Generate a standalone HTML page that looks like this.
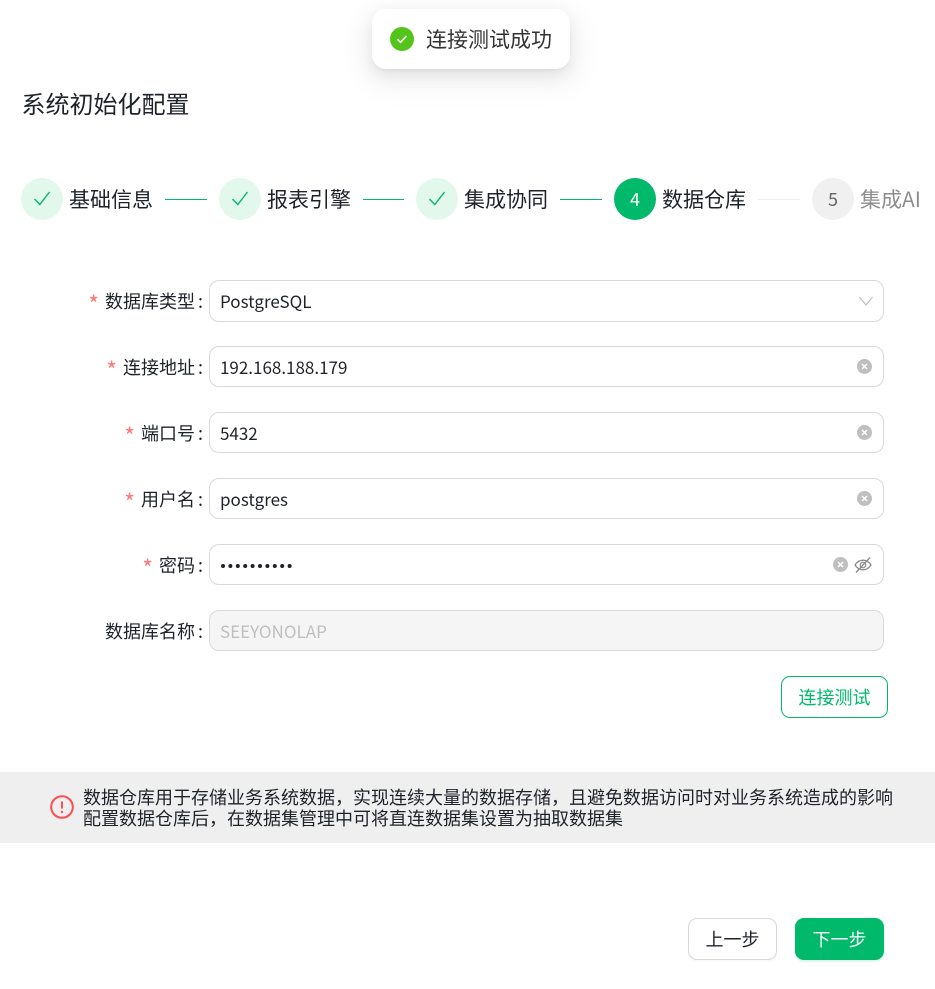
<!DOCTYPE html>
<html lang="zh"><head><meta charset="utf-8"><title>系统初始化配置</title>
<style>
*{box-sizing:border-box}
html,body{margin:0;padding:0;background:#fff}
body{position:relative;width:935px;height:989px;overflow:hidden;font-family:"Noto Sans CJK SC","Liberation Sans",sans-serif;color:#1f2329}
.a{position:absolute;white-space:nowrap}
.title{left:21.500px;top:85px;font-size:24px;line-height:36px}
.c{position:absolute;top:178px;width:42px;height:42px;border-radius:50%;text-align:center;line-height:42px;font-size:18px}
.done{background:#e2f8ec}
.c svg{position:absolute;left:11px;top:11px}
.sl{position:absolute;top:184px;font-size:21px;line-height:30px;white-space:nowrap}
.ln{position:absolute;top:199px;height:1px;background:#00b96b}
.lb{position:absolute;right:732px;font-size:18px;line-height:26px;white-space:nowrap}
.lb i{font-style:normal;color:#ff7875;margin-right:6px;font-size:23px;line-height:0;position:relative;top:5px}
.lb b{font-weight:400;margin-left:3px}
.ip{position:absolute;left:209px;width:675px;height:41px;border:1px solid #d9d9d9;border-radius:10px;font-size:17px;line-height:39px;padding-left:10px}
.clr{position:absolute;width:15px;height:15px}
.btn{position:absolute;border-radius:9px;text-align:center;font-size:18px}
</style></head>
<body>
<div class="a" style="left:372px;top:9px;width:198px;height:60px;background:#fff;border-radius:14px;box-shadow:0 6px 16px rgba(0,0,0,.08),0 3px 6px -4px rgba(0,0,0,.12),0 9px 28px 8px rgba(0,0,0,.05)"></div>
<svg class="a" style="left:390px;top:27px" width="24" height="24" viewBox="0 0 24 24"><circle cx="12" cy="12" r="12" fill="#52c41a"/><path d="M7.5 12.3l3 3 6-6.3" fill="none" stroke="#fff" stroke-width="1.6"/></svg>
<div class="a" style="left:426px;top:24px;font-size:21px;line-height:30px;color:#333">连接测试成功</div>

<div class="a title">系统初始化配置</div>

<div class="c done" style="left:21px"><svg width="20" height="20" viewBox="0 0 20 20"><path d="M2.5 10l5.300 5.500L17.500 3" fill="none" stroke="#00b96b" stroke-width="1.400"/></svg></div>
<div class="sl" style="left:69px">基础信息</div>
<div class="ln" style="left:165px;width:42px"></div>
<div class="c done" style="left:219px"><svg width="20" height="20" viewBox="0 0 20 20"><path d="M2.5 10l5.300 5.500L17.500 3" fill="none" stroke="#00b96b" stroke-width="1.400"/></svg></div>
<div class="sl" style="left:267px">报表引擎</div>
<div class="ln" style="left:363px;width:41px"></div>
<div class="c done" style="left:416px"><svg width="20" height="20" viewBox="0 0 20 20"><path d="M2.5 10l5.300 5.500L17.500 3" fill="none" stroke="#00b96b" stroke-width="1.400"/></svg></div>
<div class="sl" style="left:464px">集成协同</div>
<div class="ln" style="left:560px;width:42px"></div>
<div class="c" style="left:614px;background:#00b96b;color:#fff">4</div>
<div class="sl" style="left:662px">数据仓库</div>
<div class="ln" style="left:758px;width:42px;background:#f0f0f0"></div>
<div class="c" style="left:812px;background:#f0f0f0;color:#666">5</div>
<div class="sl" style="left:860px;color:#8c8c8c">集成AI</div>

<div class="lb" style="top:288px"><i>*</i>数据库类型<b>:</b></div>
<div class="ip" style="top:280px;height:42px;line-height:40px">PostgreSQL</div>
<svg class="a" style="left:859px;top:295px" width="14" height="12" viewBox="0 0 14 12"><path d="M.5 2l6.5 8L13.500 2" fill="none" stroke="#bfbfbf" stroke-width="1.200"/></svg>

<div class="lb" style="top:354px"><i>*</i>连接地址<b>:</b></div>
<div class="ip" style="top:346px">192.168.188.179</div>
<svg class="clr" style="left:857px;top:359px" viewBox="0 0 15 15"><circle cx="7.5" cy="7.5" r="7.500" fill="#bfbfbf"/><path d="M5 5l5 5M10 5l-5 5" stroke="#fff" stroke-width="1.500"/></svg>

<div class="lb" style="top:420px"><i>*</i>端口号<b>:</b></div>
<div class="ip" style="top:412px">5432</div>
<svg class="clr" style="left:857px;top:425px" viewBox="0 0 15 15"><circle cx="7.5" cy="7.5" r="7.500" fill="#bfbfbf"/><path d="M5 5l5 5M10 5l-5 5" stroke="#fff" stroke-width="1.500"/></svg>

<div class="lb" style="top:486px"><i>*</i>用户名<b>:</b></div>
<div class="ip" style="top:478px">postgres</div>
<svg class="clr" style="left:857px;top:491px" viewBox="0 0 15 15"><circle cx="7.5" cy="7.5" r="7.500" fill="#bfbfbf"/><path d="M5 5l5 5M10 5l-5 5" stroke="#fff" stroke-width="1.500"/></svg>

<div class="lb" style="top:552px"><i>*</i>密码<b>:</b></div>
<div class="ip" style="top:544px"></div>
<svg class="a" style="left:221px;top:562px" width="72" height="8" viewBox="0 0 72 8" fill="#1f2329"><circle cx="2" cy="4" r="2"/><circle cx="9.400" cy="4" r="2"/><circle cx="16.800" cy="4" r="2"/><circle cx="24.200" cy="4" r="2"/><circle cx="31.600" cy="4" r="2"/><circle cx="39" cy="4" r="2"/><circle cx="46.400" cy="4" r="2"/><circle cx="53.800" cy="4" r="2"/><circle cx="61.200" cy="4" r="2"/><circle cx="68.600" cy="4" r="2"/></svg>
<svg class="clr" style="left:833px;top:557px" viewBox="0 0 15 15"><circle cx="7.5" cy="7.5" r="7.500" fill="#bfbfbf"/><path d="M5 5l5 5M10 5l-5 5" stroke="#fff" stroke-width="1.500"/></svg>
<svg class="a" style="left:854px;top:556px" width="18" height="18" viewBox="0 0 18 18"><path d="M1 9c2-3.200 4.800-4.800 8-4.800s6 1.600 8 4.800c-2 3.200-4.800 4.800-8 4.800S3 12.200 1 9z" fill="none" stroke="#8c8c8c" stroke-width="1.300"/><circle cx="9" cy="9" r="2.800" fill="none" stroke="#8c8c8c" stroke-width="1.200"/><path d="M2 16.500L16 1.500" stroke="#8c8c8c" stroke-width="1.400"/></svg>

<div class="lb" style="top:618px">数据库名称<b>:</b></div>
<div class="ip" style="top:610px;background:#f5f5f5;color:#bfbfbf">SEEYONOLAP</div>

<div class="btn" style="left:781px;top:676px;width:107px;height:42px;border:1px solid #00b96b;color:#00b96b;line-height:40px;background:#fff">连接测试</div>

<div class="a" style="left:0;top:772px;width:935px;height:71px;background:#efefef"></div>
<svg class="a" style="left:50px;top:795px" width="24" height="24" viewBox="0 0 24 24"><circle cx="12" cy="12" r="10.800" fill="none" stroke="#ff4d4f" stroke-width="2"/><path d="M12 6.500v7" stroke="#ff4d4f" stroke-width="2"/><circle cx="12" cy="17" r="1.200" fill="#ff4d4f"/></svg>
<div class="a" style="left:83px;top:787px;font-size:18px;line-height:21px;color:#1f2329">数据仓库用于存储业务系统数据，实现连续大量的数据存储，且避免数据访问时对业务系统造成的影响<br>配置数据仓库后，在数据集管理中可将直连数据集设置为抽取数据集</div>

<div class="btn" style="left:688px;top:918px;width:89px;height:42px;border:1px solid #d9d9d9;line-height:40px;background:#fff;box-shadow:0 2px 0 rgba(0,0,0,.02)">上一步</div>
<div class="btn" style="left:795px;top:918px;width:89px;height:42px;background:#00b96b;color:#fff;line-height:42px;box-shadow:0 2px 0 #e2f8ec">下一步</div>
</body></html>
